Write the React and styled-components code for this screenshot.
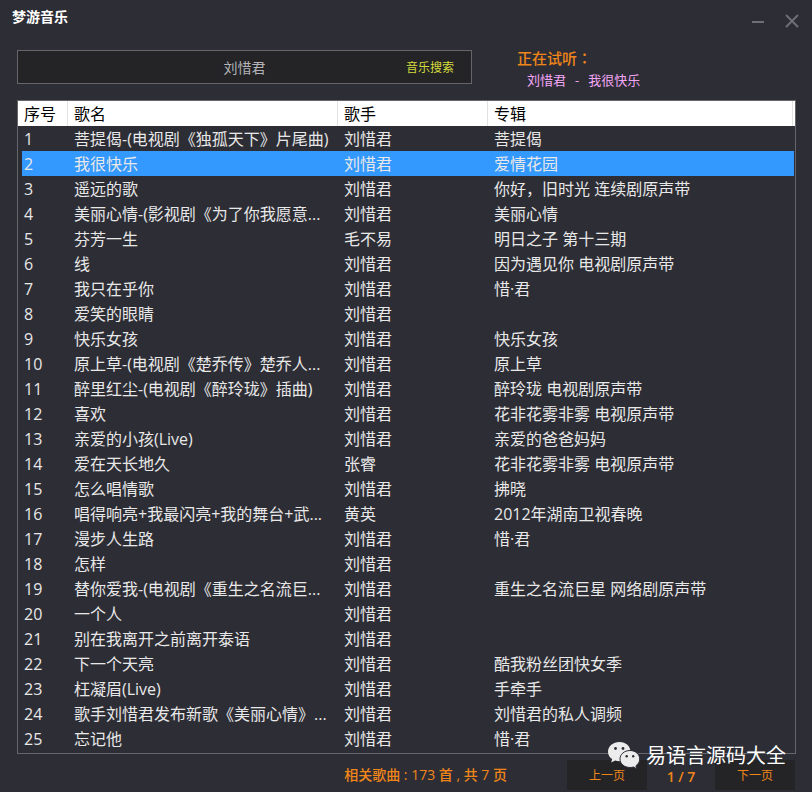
import { useState } from "react";
import styled, { createGlobalStyle } from "styled-components";

const songs = [
    ["菩提偈-(电视剧《独孤天下》片尾曲)", "刘惜君", "菩提偈"],
    ["我很快乐", "刘惜君", "爱情花园"],
    ["遥远的歌", "刘惜君", "你好，旧时光 连续剧原声带"],
    ["美丽心情-(影视剧《为了你我愿意...", "刘惜君", "美丽心情"],
    ["芬芳一生", "毛不易", "明日之子 第十三期"],
    ["线", "刘惜君", "因为遇见你 电视剧原声带"],
    ["我只在乎你", "刘惜君", "惜·君"],
    ["爱笑的眼睛", "刘惜君", ""],
    ["快乐女孩", "刘惜君", "快乐女孩"],
    ["原上草-(电视剧《楚乔传》楚乔人...", "刘惜君", "原上草"],
    ["醉里红尘-(电视剧《醉玲珑》插曲)", "刘惜君", "醉玲珑 电视剧原声带"],
    ["喜欢", "刘惜君", "花非花雾非雾 电视原声带"],
    ["亲爱的小孩(Live)", "刘惜君", "亲爱的爸爸妈妈"],
    ["爱在天长地久", "张睿", "花非花雾非雾 电视原声带"],
    ["怎么唱情歌", "刘惜君", "拂晓"],
    ["唱得响亮+我最闪亮+我的舞台+武...", "黄英", "2012年湖南卫视春晚"],
    ["漫步人生路", "刘惜君", "惜·君"],
    ["怎样", "刘惜君", ""],
    ["替你爱我-(电视剧《重生之名流巨...", "刘惜君", "重生之名流巨星 网络剧原声带"],
    ["一个人", "刘惜君", ""],
    ["别在我离开之前离开泰语", "刘惜君", ""],
    ["下一个天亮", "刘惜君", "酷我粉丝团快女季"],
    ["枉凝眉(Live)", "刘惜君", "手牵手"],
    ["歌手刘惜君发布新歌《美丽心情》...", "刘惜君", "刘惜君的私人调频"],
    ["忘记他", "刘惜君", "惜·君"],
];

export default function App () {
    const [keyword, setKeyword] = useState("刘惜君");
    const [selected, setSelected] = useState(1);

    return (
        <Player>
            <GlobalStyle />
            <TitleBar>
                <h1>梦游音乐</h1>
                <WindowButtons>
                    <button type="button" aria-label="最小化">
                        <svg width="14" height="14" viewBox="0 0 14 14">
                            <path d="M1 8H13" />
                        </svg>
                    </button>
                    <button type="button" aria-label="关闭">
                        <svg width="14" height="14" viewBox="0 0 14 14">
                            <path d="M1 1L13 13M13 1L1 13" />
                        </svg>
                    </button>
                </WindowButtons>
            </TitleBar>
            <TopRow>
                <SearchBox onSubmit={(e) => e.preventDefault()}>
                    <input
                        type="text"
                        aria-label="搜索歌曲"
                        value={keyword}
                        onChange={(e) => setKeyword(e.target.value)}
                    />
                    <button type="submit">音乐搜索</button>
                </SearchBox>
                <NowPlaying>
                    <h2>正在试听<Colon>：</Colon></h2>
                    <p>
                        <span>{songs[selected][1]}</span>
                        <span>-</span>
                        <span>{songs[selected][0]}</span>
                    </p>
                </NowPlaying>
            </TopRow>
            <ListBox>
                <SongTable>
                    <colgroup>
                        <Col $width="50px" />
                        <Col $width="270px" />
                        <Col $width="150px" />
                        <Col />
                    </colgroup>
                    <thead>
                        <tr>
                            <th scope="col">序号</th>
                            <th scope="col">歌名</th>
                            <th scope="col">歌手</th>
                            <th scope="col">专辑</th>
                        </tr>
                    </thead>
                    <tbody>
                        {songs.map(([name, singer, album], i) =>
                            <SongRow key={i} $selected={i === selected} onClick={() => setSelected(i)}>
                                <td>{i + 1}</td>
                                <td>{name}</td>
                                <td>{singer}</td>
                                <td>{album}</td>
                            </SongRow>
                        )}
                    </tbody>
                </SongTable>
            </ListBox>
            <Footer>
                <Total>相关歌曲 : 173 首 , 共 7 页</Total>
                <Pager>
                    <PageButton type="button">上一页</PageButton>
                    <span>1 / 7</span>
                    <PageButton type="button">下一页</PageButton>
                </Pager>
                <Watermark>
                    <WechatLogo />
                    易语言源码大全
                </Watermark>
            </Footer>
        </Player>
    )
}

function WechatLogo () {
    return (
        <svg width="32" height="28" viewBox="0 0 32 28" aria-hidden="true">
            <path fill="#ececec" d="M11.500 0C5 0 0 4.300 0 9.700c0 3 1.600 5.600 4.200 7.400L3.200 20.600l4-2c1.300.4 2.700.6 4.300.6C18 19.200 22.500 15 22.500 9.700S18 0 11.500 0z" />
            <path fill="#ececec" stroke="#2d2d35" strokeWidth="1" d="M22 8.500c-5.700 0-10 3.800-10 8.500s4.300 8.500 10 8.500c1.200 0 2.400-.2 3.500-.5l3.300 1.800-.9-3c2.300-1.600 3.800-4 3.800-6.800 0-4.700-4.200-8.500-9.700-8.500z" />
            <g fill="#2d2d35">
                <circle cx="7.500" cy="6.500" r="1.400" />
                <circle cx="15" cy="6.500" r="1.400" />
                <circle cx="18.700" cy="14.200" r="1.200" />
                <circle cx="25.200" cy="14.200" r="1.200" />
            </g>
        </svg>
    )
}

const GlobalStyle = createGlobalStyle`
    * {
        box-sizing: border-box;
    }
    body {
        margin: 0;
        background-color: #2d2d35;
        font-family: "Open Sans", "Noto Sans CJK SC", sans-serif;
        text-spacing-trim: space-all;
    }
    h1, h2, p {
        margin: 0;
    }
    button, input {
        border: none;
        padding: 0;
        background: none;
        font-family: inherit;
    }
    button {
        cursor: pointer;
    }
`
const Player = styled.div`
    display: flex;
    flex-direction: column;
    min-height: 100vh;
    padding: 0 16px 0 17px;
`
const TitleBar = styled.header`
    display: flex;
    justify-content: space-between;
    height: 50px;
    margin: 0 -3px 0 -5px;

    h1 {
        color: #ffffff;
        font-size: 14px;
        line-height: 34px;
        font-weight: bold;
    }
`
const WindowButtons = styled.div`
    display: flex;
    gap: 20px;
    padding-top: 14px;

    button {
        width: 14px;
        height: 14px;
    }
    svg {
        display: block;
        fill: none;
        stroke: #6e6e74;
        stroke-width: 2;
    }
`
const TopRow = styled.div`
    display: flex;
    height: 50px;
`
const SearchBox = styled.form`
    display: flex;
    flex: 0 1 455px;
    height: 34px;
    background-color: #242427;
    border: 1px solid #66666a;

    input {
        flex: 1;
        min-width: 0;
        padding-left: 82px;
        color: #b4b4b8;
        font-size: 14px;
        text-align: center;
        outline: none;
    }
    button {
        width: 82px;
        color: #d6dc3c;
        font-size: 12px;
    }
`
const NowPlaying = styled.div`
    flex: 1;
    padding-left: 45px;
    white-space: nowrap;

    h2 {
        color: #f0861a;
        font-size: 15px;
        line-height: 16px;
        font-weight: 500;
    }
    p {
        display: flex;
        gap: 9px;
        padding-left: 10px;
        color: #f3a6f6;
        font-size: 13px;
        line-height: 28px;
    }
`
// the TC face centres the full-width colon
const Colon = styled.span`
    font-family: "Noto Sans CJK TC", sans-serif;
`
const ListBox = styled.main`
    padding-bottom: 2px;
    border: 1px solid #66666a;
`
const SongTable = styled.table`
    width: 100%;
    table-layout: fixed;
    border-collapse: separate;
    border-spacing: 0;
    font-size: 16px;
    line-height: 23px;
    text-align: left;

    th, td {
        height: 25px;
        padding: 2px 0 0 6px;
        overflow: hidden;
        white-space: nowrap;
        font-weight: normal;
    }
    th {
        color: #000000;
        background-color: #ffffff;
        border-right: 1px solid #e2e2e2;
    }
    th:last-child {
        box-shadow: inset -2px 0 #ffffff, inset -3px 0 #e2e2e2;
        border-right: none;
    }
`
const Col = styled.col`
    width: ${({ $width }) => $width || "auto"};
`
const SongRow = styled.tr`
    color: #e8e8e8;

    td {
        background-color: ${({ $selected }) => $selected ? "#3399ff" : "transparent"};
        background-clip: padding-box;
    }
    td:first-child {
        padding-left: 2px;
        border-left: 4px solid transparent;
    }
    td:last-child {
        border-right: 1px solid transparent;
    }
`
const Footer = styled.footer`
    position: relative;
    display: flex;
    justify-content: flex-end;
    padding: 6px 1px 0 0;
    color: #f0861a;
`
const Total = styled.p`
    margin-right: 60px;
    font-size: 14px;
    line-height: 30px;
    font-weight: 500;
`
const Pager = styled.nav`
    display: flex;

    span {
        width: 68px;
        padding-top: 2px;
        font-size: 14px;
        line-height: 30px;
        font-weight: 600;
        text-align: center;
    }
`
const PageButton = styled.button`
    width: 80px;
    height: 30px;
    color: #f0861a;
    background-color: #242427;
    font-size: 12px;
`
const Watermark = styled.div`
    position: absolute;
    top: -12px;
    right: 10px;
    display: flex;
    align-items: center;
    gap: 6px;
    color: #ffffff;
    font-size: 20px;
    line-height: 28px;
    pointer-events: none;
`
